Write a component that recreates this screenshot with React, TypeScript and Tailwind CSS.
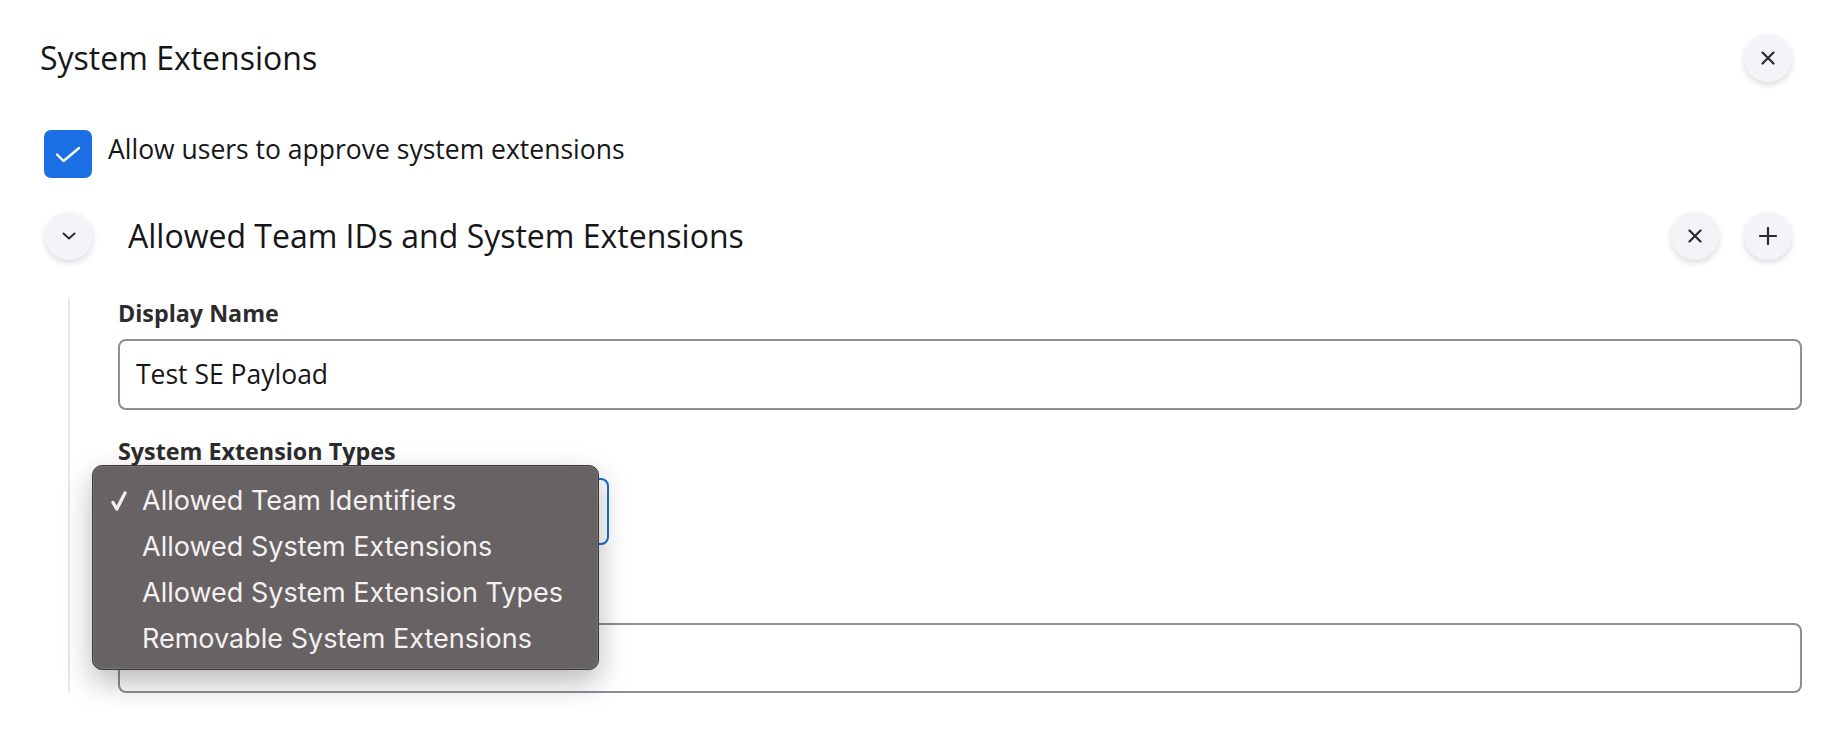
import type { ReactNode } from "react";

function RoundButton({ children }: { children: ReactNode }) {
  return (
    <button className="flex h-[48px] w-[48px] shrink-0 items-center justify-center rounded-full bg-[#f3f4f8] text-[#2a2a2c] shadow-[0_3px_6px_rgba(0,0,0,0.14)]">
      {children}
    </button>
  );
}

function XIcon() {
  return (
    <svg width="14" height="14" viewBox="0 0 14 14" fill="none" stroke="currentColor" strokeWidth="2.2" strokeLinecap="round">
      <path d="M1.5 1.5 12.5 12.5M12.5 1.5 1.5 12.5" />
    </svg>
  );
}

function PlusIcon() {
  return (
    <svg width="18" height="18" viewBox="0 0 18 18" fill="none" stroke="currentColor" strokeWidth="2.2" strokeLinecap="round">
      <path d="M9 1v16M1 9h16" />
    </svg>
  );
}

function ChevronDown() {
  return (
    <svg width="14" height="8" viewBox="0 0 14 8" fill="none" stroke="currentColor" strokeWidth="1.9" strokeLinecap="round" strokeLinejoin="round">
      <path d="M1.5 1.5 7 6.5 12.5 1.5" />
    </svg>
  );
}

const options = [
  "Allowed Team Identifiers",
  "Allowed System Extensions",
  "Allowed System Extension Types",
  "Removable System Extensions",
];

export default function App() {
  return (
    <div className="min-h-screen bg-white font-['Open_Sans',sans-serif] text-[#161618]">
      <div className="pl-[40px] pr-[24px] pt-[34px]">
        {/* header */}
        <div className="flex h-[48px] items-center justify-between pr-[10px]">
          <h1 className="text-[32px] leading-none">System Extensions</h1>
          <RoundButton>
            <XIcon />
          </RoundButton>
        </div>

        <label className="ml-[4px] mt-[48px] flex items-center gap-[16px]">
          <span className="flex h-[48px] w-[48px] items-center justify-center rounded-[7px] bg-[#1b6fe4]">
            <svg width="26" height="17" viewBox="0 0 26 17" fill="none" stroke="white" strokeWidth="2.4" strokeLinecap="round" strokeLinejoin="round">
              <path d="M2 8.5 8.5 15 24 2" />
            </svg>
          </span>
          <span className="pb-[9px] text-[26.5px] leading-none">Allow users to approve system extensions</span>
        </label>

        {/* payload section */}
        <div className="mt-[34px] flex items-center pl-[5px] pr-[10px]">
          <RoundButton>
            <ChevronDown />
          </RoundButton>
          <h2 className="ml-[35px] text-[32px] leading-none">Allowed Team IDs and System Extensions</h2>
          <div className="ml-auto flex gap-[25px]">
            <RoundButton>
              <XIcon />
            </RoundButton>
            <RoundButton>
              <PlusIcon />
            </RoundButton>
          </div>
        </div>

        <div className="ml-[28px] mt-[38px] border-l-2 border-[#e7e8ec] pl-[48px] pt-[3px]">
          <div className="text-[23.3px] font-bold leading-[24px] text-[#2c2c2e]">Display Name</div>
          <div className="mt-[14px] flex h-[71px] items-center rounded-[8px] border-2 border-[#8b8e94] px-[16px] text-[26.5px]">
            Test SE Payload
          </div>

          <div className="mt-[29px] text-[23.3px] font-bold leading-[24px] text-[#2c2c2e]">System Extension Types</div>
          <div className="relative mt-[15px] h-[67px] w-[491px] rounded-[8px] border-2 border-[#1b6ad6]">
            {/* native select popup */}
            <div className="absolute left-[-28px] top-[-15px] z-10 h-[205px] w-[507px] rounded-[10px] border border-[#3a3838] bg-[#676263] pt-[12px] font-[Inter,sans-serif] text-[#f3f1f1] shadow-[0_12px_30px_rgba(0,0,0,0.28),inset_0_0_0_1px_rgba(255,255,255,0.12)]">
              {options.map((o, i) => (
                <div key={o} className="relative pl-[49px] text-[27px] leading-[46px]">
                  {i === 0 && (
                    <svg className="absolute left-[18px] top-[13px]" width="16" height="20" viewBox="0 0 16 20" fill="none" stroke="#f3f1f1" strokeWidth="3.3" strokeLinecap="round" strokeLinejoin="round">
                      <path d="M2 11.5 5.8 18 14 2" />
                    </svg>
                  )}
                  {o}
                </div>
              ))}
            </div>
          </div>

          {/* label of the next field sits under the popup */}
          <div className="mt-[40px] h-[24px]" />
          <div className="mt-[14px] h-[70px] rounded-[8px] border-2 border-[#8b8e94]" />
        </div>
      </div>
    </div>
  );
}
